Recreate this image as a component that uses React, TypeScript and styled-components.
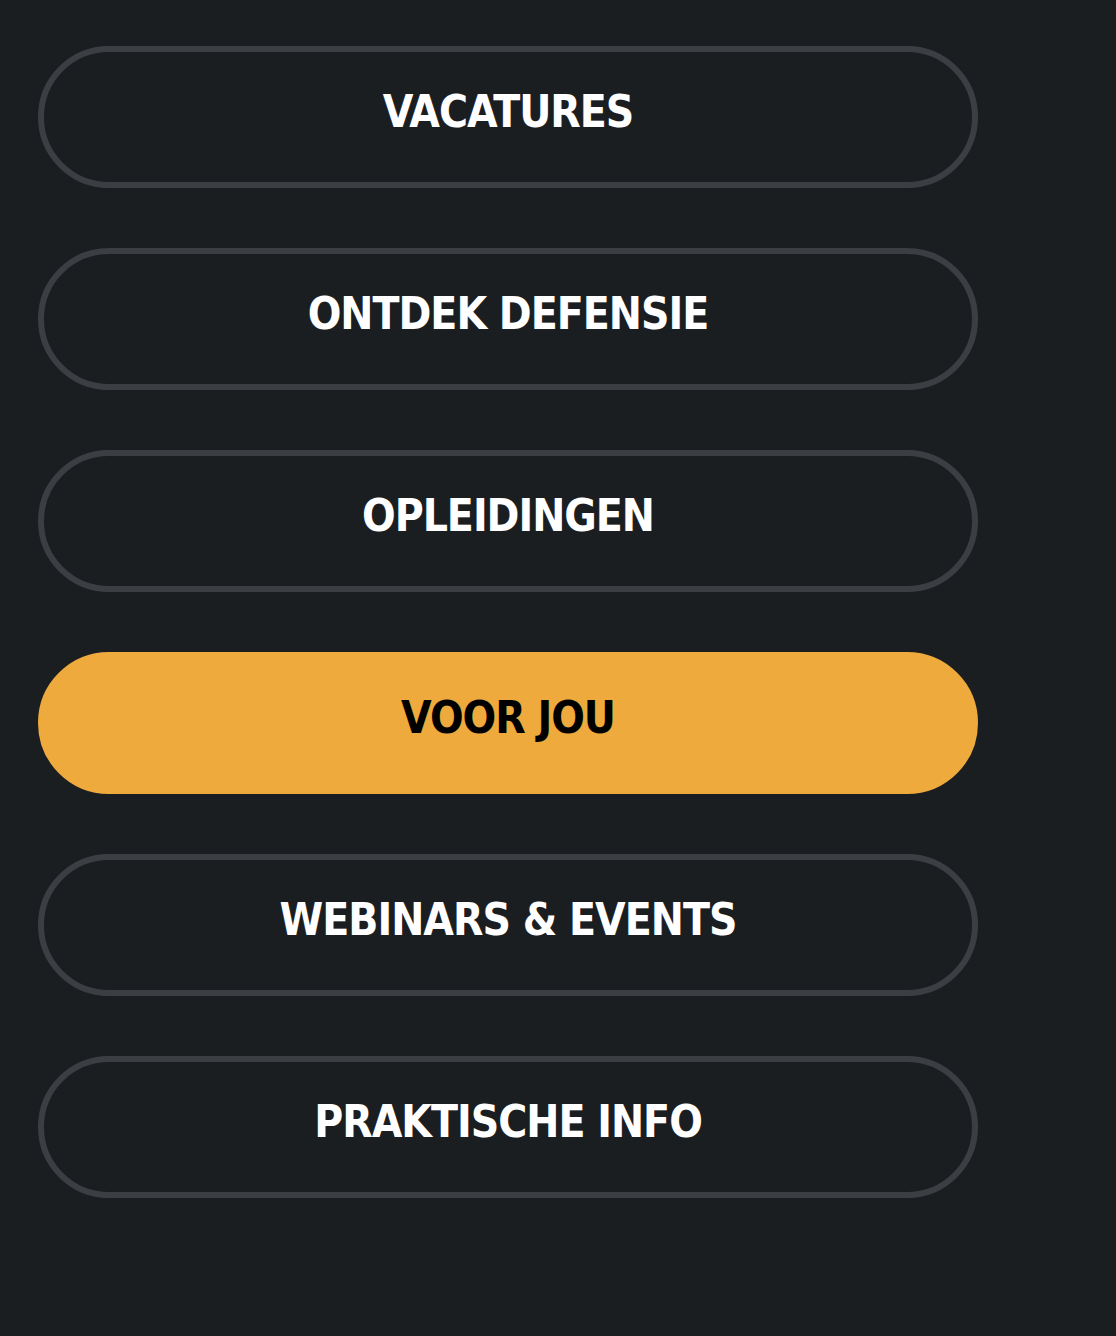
import styled, { createGlobalStyle } from 'styled-components';

const menuItems = [
  { id: 1, name: 'VACATURES', to: '#vacatures' },
  { id: 2, name: 'ONTDEK DEFENSIE', to: '#ontdek' },
  { id: 3, name: 'OPLEIDINGEN', to: '#opleidingen' },
  { id: 4, name: 'VOOR JOU', to: '#voor-jou', active: true },
  { id: 5, name: 'WEBINARS & EVENTS', to: '#events' },
  { id: 6, name: 'PRAKTISCHE INFO', to: '#info' }
];

const GlobalStyle = createGlobalStyle`
  html, body {
    margin: 0;
    padding: 0;
    background: #1b1e21;
  }
`;

export default function App() {
  return (
    <>
      <GlobalStyle />
      <Page>
        <Menu>
          {menuItems.map((item) => (
            <li key={item.id}>
              <PillLink href={item.to} $active={!!item.active}>
                <Label>{item.name}</Label>
              </PillLink>
            </li>
          ))}
        </Menu>
      </Page>
    </>
  );
}

const Page = styled.div`
  min-height: 1336px;
  background: #1b1e21;
  padding: 46px 0 0 38px;
  box-sizing: border-box;
`;

const Menu = styled.ul`
  list-style: none;
  margin: 0;
  padding: 0;
  width: 940px;
  display: flex;
  flex-direction: column;
  gap: 60px;
`;

const PillLink = styled.a<{ $active: boolean }>`
  display: flex;
  align-items: center;
  justify-content: center;
  height: 142px;
  box-sizing: border-box;
  border-radius: 71px;
  border: 6px solid ${(p) => (p.$active ? '#eeaa3c' : '#3b3f43')};
  background: ${(p) => (p.$active ? '#eeaa3c' : 'transparent')};
  color: ${(p) => (p.$active ? '#000000' : '#ffffff')};
  text-decoration: none;
  padding-bottom: 10px;
`;

const Label = styled.span`
  font-family: 'DejaVu Sans Condensed', 'DejaVu Sans', sans-serif;
  font-weight: 700;
  font-size: 44px;
  letter-spacing: -1px;
  line-height: 1;
`;
